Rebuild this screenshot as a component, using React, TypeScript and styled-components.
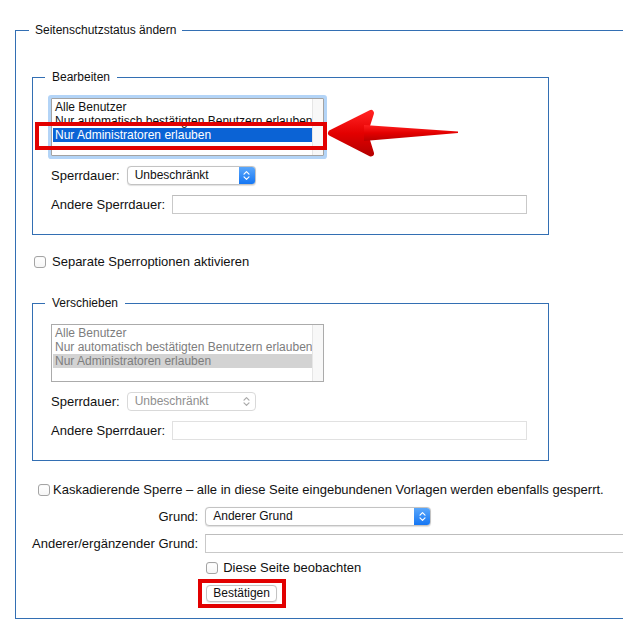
import React from "react";
import styled, { createGlobalStyle, css } from "styled-components";

const GlobalStyle = createGlobalStyle`
  html, body {
    margin: 0;
    padding: 0;
    background: #fff;
    overflow: hidden;
  }
  body {
    font-family: "Liberation Sans", Arial, Helvetica, sans-serif;
    color: #111;
  }
`;

const BLUE = "#336fb3";
const RED = "#e20000";

const Page = styled.div`
  padding: 22px 0 0 15px;
  overflow: hidden;
`;

const Outer = styled.fieldset`
  margin: 0;
  width: 720px;
  box-sizing: border-box;
  border: 1px solid ${BLUE};
  padding: 0 0 16px 16px;
  min-inline-size: 0;
`;

const Legend = styled.legend<{ $outer?: boolean }>`
  font-size: 12px;
  line-height: 16px;
  padding: 0 ${(p) => (p.$outer ? 6 : 7)}px;
  margin-left: ${(p) => (p.$outer ? -3 : -6)}px;
  color: #111;
`;

const Section = styled.fieldset<{ $gap: number }>`
  margin: ${(p) => p.$gap}px 0 0 0;
  width: 517px;
  box-sizing: border-box;
  border: 1px solid ${BLUE};
  padding: 13px 18px 20px 18px;
  min-inline-size: 0;
`;

const ListWrap = styled.div`
  position: relative;
  width: 273px;
`;

const ListBox = styled.div<{ $focused?: boolean; $disabled?: boolean }>`
  box-sizing: border-box;
  width: 273px;
  height: 58px;
  border: 1px solid ${(p) => (p.$disabled ? "#ababab" : "#a3a3a3")};
  display: flex;
  background: #fff;
  ${(p) =>
    p.$focused &&
    css`
      box-shadow: 0 0 0 3px #b3d4f7;
      border-radius: 1px;
    `}
`;

const Options = styled.div`
  flex: 1;
  padding: 1px 0 0 1px;
  overflow: hidden;
`;

const Option = styled.div<{ $selected?: boolean; $disabled?: boolean }>`
  height: 14px;
  line-height: 14px;
  font-size: 12px;
  padding-left: 2px;
  white-space: nowrap;
  overflow: hidden;
  color: ${(p) =>
    p.$disabled ? "#7d7d7d" : p.$selected ? "#fff" : "#111"};
  background: ${(p) =>
    p.$selected ? (p.$disabled ? "#d3d3d3" : "#0b63d5") : "transparent"};
`;

const ScrollTrack = styled.div`
  width: 10px;
  border-left: 1px solid #e6e6e6;
  background: #f8f8f8;
`;

const Highlight = styled.div<{
  $left: number;
  $top: number;
  $w: number;
  $h: number;
}>`
  position: absolute;
  left: ${(p) => p.$left}px;
  top: ${(p) => p.$top}px;
  width: ${(p) => p.$w}px;
  height: ${(p) => p.$h}px;
  box-sizing: border-box;
  border: 4px solid ${RED};
  pointer-events: none;
`;

const ArrowSvg = styled.svg`
  position: absolute;
  left: 275px;
  top: 11px;
  overflow: visible;
`;

const Row = styled.div`
  display: flex;
  align-items: center;
  gap: 7px;
  margin-top: 10px;
`;

const Label = styled.span<{ $right?: boolean }>`
  font-size: 13px;
  line-height: 16px;
  white-space: nowrap;
  text-align: ${(p) => (p.$right ? "right" : "left")};
`;

const SelectBox = styled.div<{ $w: number; $disabled?: boolean }>`
  box-sizing: border-box;
  width: ${(p) => p.$w}px;
  height: 19px;
  display: flex;
  align-items: stretch;
  border: 1px solid ${(p) => (p.$disabled ? "#d9d9d9" : "#c3c3c3")};
  border-radius: 4px;
  background: #fff;
  box-shadow: ${(p) => (p.$disabled ? "none" : "0 0.5px 1px rgba(0,0,0,0.12)")};
  overflow: hidden;
`;

const SelectText = styled.span<{ $disabled?: boolean }>`
  flex: 1;
  font-size: 12px;
  line-height: 17px;
  padding-left: 7px;
  color: ${(p) => (p.$disabled ? "#8f8f8f" : "#111")};
  white-space: nowrap;
`;

const Chevron = styled.span<{ $disabled?: boolean }>`
  width: 16px;
  display: flex;
  align-items: center;
  justify-content: center;
  background: ${(p) =>
    p.$disabled ? "transparent" : "linear-gradient(#5aa7fb, #1576f3)"};
`;

const TextInput = styled.input<{ $w: number }>`
  box-sizing: border-box;
  width: ${(p) => p.$w}px;
  height: 19px;
  margin: 0;
  padding: 0 3px;
  border: 1px solid #c9c9c9;
  border-top-color: #bdbdbd;
  background: #fff;
  font-family: inherit;
  font-size: 12px;
  outline: none;
  &:disabled {
    border-color: #e1e1e1;
    background: #fff;
  }
`;

const CheckRow = styled.label<{ $indent?: number; $gap?: number }>`
  display: flex;
  align-items: center;
  gap: ${(p) => p.$gap ?? 6}px;
  padding-left: ${(p) => p.$indent ?? 0}px;
  font-size: 13px;
  line-height: 16px;
  white-space: nowrap;
`;

const Box = styled.span`
  box-sizing: border-box;
  width: 12px;
  height: 12px;
  border: 1px solid #a4a4a4;
  border-radius: 3px;
  background: linear-gradient(#fff, #f6f6f6);
  box-shadow: inset 0 0.5px 0 rgba(0, 0, 0, 0.05);
  flex: none;
`;

const FormGrid = styled.div`
  display: grid;
  grid-template-columns: auto 1fr;
  column-gap: 7px;
  align-items: center;
  margin-top: 21px;
`;

const Span2 = styled.div<{ $mt?: number }>`
  grid-column: 1 / span 2;
  margin-top: ${(p) => p.$mt ?? 0}px;
`;

const Cell = styled.div<{ $mt?: number; $right?: boolean }>`
  margin-top: ${(p) => p.$mt ?? 0}px;
  display: flex;
  justify-content: ${(p) => (p.$right ? "flex-end" : "flex-start")};
`;

const ButtonWrap = styled.div`
  position: relative;
  display: inline-flex;
`;

const Button = styled.button`
  box-sizing: border-box;
  height: 17px;
  padding: 0 6px;
  margin: 0 0 0 1px;
  border: 1px solid #c3c3c3;
  border-radius: 4px;
  background: #fff;
  font-family: inherit;
  font-size: 12px;
  line-height: 15px;
  color: #111;
  box-shadow: 0 0.5px 1px rgba(0, 0, 0, 0.1);
`;

function ChevronIcon({ color }: { color: string }) {
  return (
    <svg width="7" height="11" viewBox="0 0 7 11">
      <path
        d="M1 4.2 L3.5 1.7 L6 4.2 M1 6.8 L3.5 9.3 L6 6.8"
        fill="none"
        stroke={color}
        strokeWidth="1.2"
        strokeLinecap="round"
        strokeLinejoin="round"
      />
    </svg>
  );
}

function Select({
  value,
  width,
  disabled,
}: {
  value: string;
  width: number;
  disabled?: boolean;
}) {
  return (
    <SelectBox $w={width} $disabled={disabled}>
      <SelectText $disabled={disabled}>{value}</SelectText>
      <Chevron $disabled={disabled}>
        <ChevronIcon color={disabled ? "#a9a9a9" : "#fff"} />
      </Chevron>
    </SelectBox>
  );
}

function Arrow() {
  return (
    <ArrowSvg width="132" height="50" viewBox="0 0 132 50">
      <defs>
        <linearGradient id="redArrow" x1="0" y1="0" x2="0" y2="1">
          <stop offset="0" stopColor="#ff2020" />
          <stop offset="0.5" stopColor="#e30000" />
          <stop offset="1" stopColor="#b90000" />
        </linearGradient>
      </defs>
      <path
        d="M5 24 L45 4 L41 16.5 L41 31.5 L45 44.5 Z"
        fill="url(#redArrow)"
        stroke="url(#redArrow)"
        strokeWidth="6"
        strokeLinejoin="round"
      />
      <path d="M38 16 L132 22.6 L132 24 L38 32 Z" fill="url(#redArrow)" />
    </ArrowSvg>
  );
}

const levels = [
  "Alle Benutzer",
  "Nur automatisch bestätigten Benutzern erlauben",
  "Nur Administratoren erlauben",
];

function LevelList({ disabled }: { disabled?: boolean }) {
  return (
    <ListBox $focused={!disabled} $disabled={disabled}>
      <Options>
        {levels.map((l, i) => (
          <Option key={l} $selected={i === 2} $disabled={disabled}>
            {l}
          </Option>
        ))}
      </Options>
      <ScrollTrack />
    </ListBox>
  );
}

function ProtectSection({
  title,
  gap,
  disabled,
}: {
  title: string;
  gap: number;
  disabled?: boolean;
}) {
  return (
    <Section $gap={gap}>
      <Legend>{title}</Legend>
      <ListWrap>
        <LevelList disabled={disabled} />
        {!disabled && (
          <>
            <Highlight $left={-16} $top={24} $w={292} $h={28} />
            <Arrow />
          </>
        )}
      </ListWrap>
      <Row>
        <Label>Sperrdauer:</Label>
        <Select value="Unbeschränkt" width={129} disabled={disabled} />
      </Row>
      <Row>
        <Label>Andere Sperrdauer:</Label>
        <TextInput $w={355} disabled={disabled} />
      </Row>
    </Section>
  );
}

export default function App() {
  return (
    <>
      <GlobalStyle />
      <Page>
        <Outer>
          <Legend $outer>Seitenschutzstatus ändern</Legend>
          <ProtectSection title="Bearbeiten" gap={31} />
          <CheckRow $indent={2} style={{ marginTop: 19 }}>
            <Box />
            Separate Sperroptionen aktivieren
          </CheckRow>
          <ProtectSection title="Verschieben" gap={25} disabled />
          <FormGrid>
            <Span2>
              <CheckRow $indent={6} $gap={3}>
                <Box />
                Kaskadierende Sperre – alle in diese Seite eingebundenen
                Vorlagen werden ebenfalls gesperrt.
              </CheckRow>
            </Span2>
            <Cell $mt={9} $right>
              <Label $right>Grund:</Label>
            </Cell>
            <Cell $mt={9}>
              <Select value="Anderer Grund" width={226} />
            </Cell>
            <Cell $mt={8} $right>
              <Label $right>Anderer/ergänzender Grund:</Label>
            </Cell>
            <Cell $mt={8}>
              <TextInput $w={460} />
            </Cell>
            <div />
            <Cell $mt={7}>
              <CheckRow $indent={1} $gap={5}>
                <Box />
                Diese Seite beobachten
              </CheckRow>
            </Cell>
            <div />
            <Cell $mt={9}>
              <ButtonWrap>
                <Button type="button">Bestätigen</Button>
                <Highlight $left={-7} $top={-6} $w={88} $h={29} />
              </ButtonWrap>
            </Cell>
          </FormGrid>
        </Outer>
      </Page>
    </>
  );
}
